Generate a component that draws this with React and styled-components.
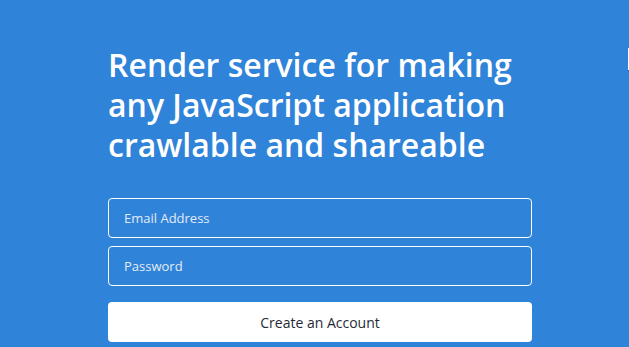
import React from "react";
import styled, { createGlobalStyle } from "styled-components";

const GlobalStyle = createGlobalStyle`
    html, body {
        margin: 0;
        padding: 0;
        background: #2f83d9;
        font-family: "Open Sans", "Noto Sans", sans-serif;
    }

    * {
        box-sizing: border-box;
    }
`;

const Page = styled.div`
    position: relative;
    height: 347px;
    overflow: hidden;
    background: #2f83d9;
    padding: 45px 0 0 108px;
`;

const EdgePanel = styled.div`
    position: absolute;
    top: 48px;
    right: 0;
    width: 1px;
    height: 23px;
    background: #f4f7fb;
    border-bottom: 1px solid #1d5fae;
`;

const Signup = styled.div`
    display: flex;
    flex-direction: column;
    width: 424px;
`;

const Heading = styled.h1`
    margin: 0 0 33px;
    font-size: 32px;
    line-height: 40px;
    font-weight: 600;
    color: #ffffff;
`;

const Form = styled.form`
    display: flex;
    flex-direction: column;
    row-gap: 8px;
`;

const Input = styled.input`
    height: 40px;
    padding: 0 15px;
    border: 1px solid #ffffff;
    border-radius: 4px;
    background: transparent;
    font-family: inherit;
    font-size: 13px;
    color: #ffffff;
    outline: none;

    &::placeholder {
        color: #e3ebf7;
        opacity: 1;
    }
`;

const Button = styled.button`
    height: 40px;
    margin-top: 8px;
    border: none;
    border-radius: 4px;
    background: #ffffff;
    font-family: inherit;
    font-size: 14px;
    color: #1f2a36;
    cursor: pointer;
`;

const App = () => {
    return (
        <>
            <GlobalStyle />
            <Page>
                <EdgePanel />
                <Signup>
                    <Heading>
                        Render service for making any JavaScript application crawlable and shareable
                    </Heading>
                    <Form onSubmit={(e) => e.preventDefault()}>
                        <Input type="email" placeholder="Email Address" />
                        <Input type="password" placeholder="Password" />
                        <Button type="submit">Create an Account</Button>
                    </Form>
                </Signup>
            </Page>
        </>
    );
};

export default App;
